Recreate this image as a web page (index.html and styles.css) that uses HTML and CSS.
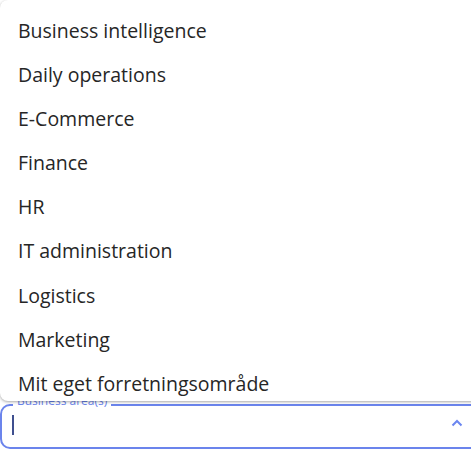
FILE: index.html
```html
<!DOCTYPE html>
<html lang="en">
<head>
    <meta charset="UTF-8">
    <meta name="viewport" content="width=device-width, initial-scale=1.0">
    <title>Business area</title>
    <link rel="stylesheet" href="styles.css">
</head>
<body>
    <div class="page">
        <div class="select-field">
            <!-- Options list, opened above the input -->
            <ul class="options-menu">
                <li class="option">Business intelligence</li>
                <li class="option">Daily operations</li>
                <li class="option">E-Commerce</li>
                <li class="option">Finance</li>
                <li class="option">HR</li>
                <li class="option">IT administration</li>
                <li class="option">Logistics</li>
                <li class="option">Marketing</li>
                <li class="option">Mit eget forretningsområde</li>
                <li class="option">Sales</li>
            </ul>

            <div class="field-outline">
                <label class="field-label">Business area(s)</label>
                <span class="caret"></span>
                <svg class="chevron" width="12" height="8" viewBox="0 0 12 8">
                    <polyline points="1.5,6.5 6,2 10.5,6.5" fill="none" stroke="#6b86f0" stroke-width="2"/>
                </svg>
            </div>
        </div>
    </div>
</body>
</html>
```

FILE: styles.css
```css
/* Base Styles */
* {
    margin: 0;
    padding: 0;
    box-sizing: border-box;
}

body {
    font-family: 'Open Sans', sans-serif;
    background-color: #fff;
    overflow: hidden;
}

.page {
    height: 100vh;
    display: flex;
    flex-direction: column;
    justify-content: flex-end;
    padding-bottom: 15px;
}

/* Select field */
.select-field {
    position: relative;
    width: calc(100% + 20px);
}

.field-outline {
    position: relative;
    height: 45px;
    border: 2px solid #6b84ec;
    border-radius: 10px;
    padding: 0 10px;
    display: flex;
    align-items: center;
    justify-content: space-between;
}

.field-label {
    position: absolute;
    top: -13px;
    left: 11px;
    font-size: 12px;
    line-height: 16px;
    color: #6b84ec;
    background-color: #fff;
    padding: 0 4px;
}

.caret {
    width: 2px;
    height: 20px;
    background-color: #3f4f8f;
    margin-top: -3px;
}

.chevron {
    margin-right: 16px;
    margin-top: -7px;
}

/* Options menu */
.options-menu {
    position: absolute;
    left: 0;
    right: 0;
    bottom: 48px;
    height: 401px;
    overflow: hidden;
    list-style: none;
    background-color: #fff;
    border-radius: 8px;
    box-shadow: 0 1px 3px rgba(0, 0, 0, 0.35);
    padding-top: 9px;
    z-index: 2;
}

.option {
    font-size: 19.5px;
    line-height: 24px;
    padding: 10px 18px;
    height: 44.1px;
    color: #262626;
}
```
